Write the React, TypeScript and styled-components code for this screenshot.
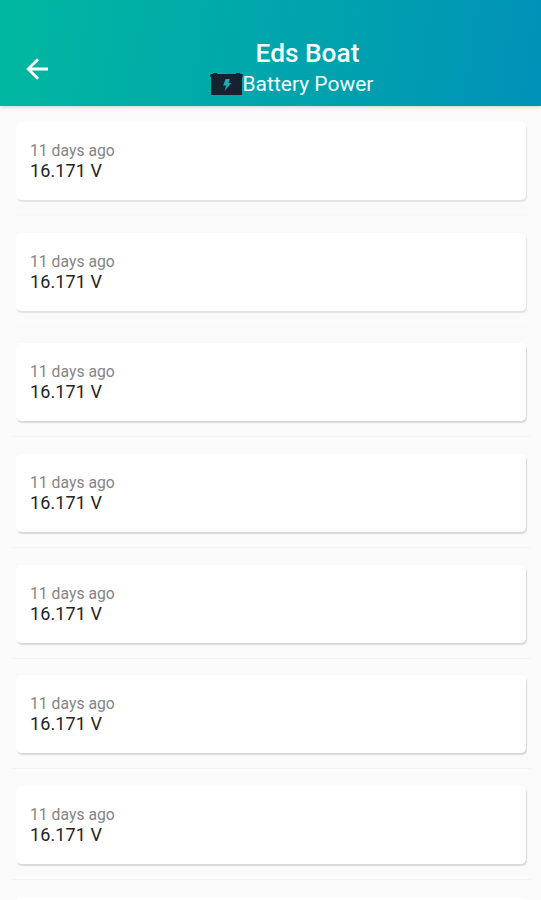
import React from "react";
import styled, { createGlobalStyle } from "styled-components";

const GlobalStyle = createGlobalStyle`
  * { box-sizing: border-box; }
  html, body { margin: 0; background: #fafafa; }
  body { font-family: Roboto, sans-serif; overflow: hidden; }
`;

const Screen = styled.main`
  display: flex;
  flex-direction: column;
  height: 900px;
  overflow: hidden;
  background: #fafafa;
`;

const Header = styled.header`
  display: grid;
  grid-template-columns: 74px 1fr;
  flex: none;
  height: 105.5px;
  padding-top: 32px;
  color: #f4ffff;
  background: linear-gradient(98deg, #00b8a0 0%, #00aaa9 38%, #009fb0 68%, #0092b8 100%);
  box-shadow: 0 1px 4px rgba(0, 0, 0, 0.16);
`;

const BackButton = styled.button`
  display: flex;
  align-items: center;
  justify-content: center;
  height: 74px;
  padding: 0;
  border: 0;
  background: none;
  color: #fff;
`;

const Heading = styled.div`
  display: flex;
  flex-direction: column;
  align-items: center;
  padding-top: 5px;
`;

const Title = styled.h1`
  margin: 0;
  font-size: 26.3px;
  font-weight: 500;
  line-height: 32px;
  white-space: nowrap;
`;

const Subtitle = styled.div`
  display: flex;
  align-items: center;
  height: 29px;
  margin-right: 32px;
  font-size: 21px;
  white-space: nowrap;
`;

const List = styled.ul`
  flex: none;
  margin: 0;
  padding: 0 10px 0 12px;
  list-style: none;
`;

const Row = styled.li<{ $line: string }>`
  height: 110.67px;
  padding: 16.5px 4px 0;
  border-bottom: 1px solid ${({ $line }) => $line};
`;

const Card = styled.article<{ $shade: number }>`
  height: 78px;
  padding: 19px 14px 0;
  width: 510px;
  border-radius: 5px;
  background: #fff;
  box-shadow: 1px 2px 1px rgba(0, 0, 0, ${({ $shade }) => $shade}), 0 0 2px rgba(0, 0, 0, 0.02);
`;

const Age = styled.div`
  font-size: 15.75px;
  line-height: 20px;
  color: #858585;
`;

const Reading = styled.div`
  font-size: 18px;
  line-height: 20px;
  letter-spacing: 0.1px;
  color: #242424;
`;

const BackArrow = () => (
  <svg width="32" height="32" viewBox="0 0 32 32" fill="none" stroke="currentColor" strokeWidth="2.8">
    <path d="M27 16H7M17 6.2L7.2 16L17 25.8" />
  </svg>
);

const BatteryIcon = () => (
  <svg width="33" height="24" viewBox="0 0 33 24">
    <path d="M0.4 2H3V1H7V2H26V1H30V2H32.6V5H32V23H1V5H0.4Z" fill="#17222f" />
    <path d="M15.6 7H19.8L18.4 11H21.2L14.6 19L16.2 13.6H13.2Z" fill="#18aeb5" />
  </svg>
);

const rows = Array.from({ length: 7 }, (_, i) => ({
  id: i,
  age: "11 days ago",
  reading: "16.171 V",
  line: i < 2 ? "#f8f8f8" : "#f3f3f3",
  shade: i < 2 ? 0.09 : 0.13,
}));

export default function App() {
  return (
    <Screen>
      <GlobalStyle />
      <Header>
        <BackButton aria-label="Back"><BackArrow /></BackButton>
        <Heading>
          <Title>Eds Boat</Title>
          <Subtitle><BatteryIcon />Battery Power</Subtitle>
        </Heading>
      </Header>
      <List>
        {rows.map((row) => (
          <Row key={row.id} $line={row.line}>
            <Card $shade={row.shade}>
              <Age>{row.age}</Age>
              <Reading>{row.reading}</Reading>
            </Card>
          </Row>
        ))}
        <Row $line="#f3f3f3">
          <Card $shade={0.13} />
        </Row>
      </List>
    </Screen>
  );
}
